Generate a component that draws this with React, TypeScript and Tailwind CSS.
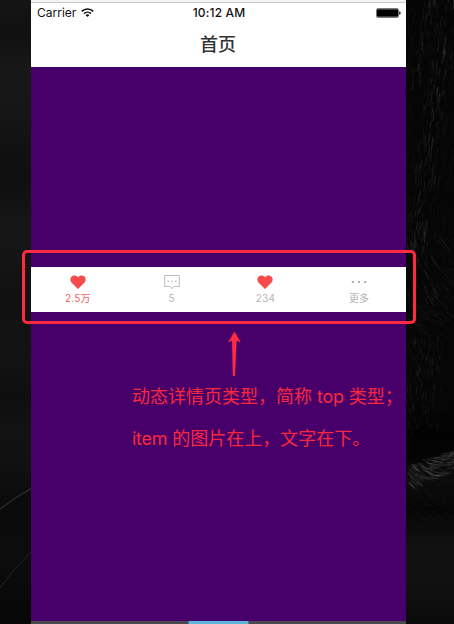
import React from "react";

const FONT = "font-['Inter','Noto_Sans_CJK_SC',sans-serif]";

type Blade = { d: string; o: number; w: number };

// Deterministic pseudo-random source, so the fur is the same on every render.
function makeRandom(seed: number) {
  let s = seed;
  return () => {
    s = (s * 1664525 + 1013904223) % 4294967296;
    return s / 4294967296;
  };
}

function buildFur(): Blade[] {
  const rnd = makeRandom(77);
  const blades: Blade[] = [];
  const add = (x: number, y: number, angle: number, len: number, o: number) => {
    const dx = Math.cos(angle) * len;
    const dy = Math.sin(angle) * len;
    const d = `M${x.toFixed(1)} ${y.toFixed(1)}q${(dx * 0.5 + 0.6).toFixed(1)} ${(dy * 0.5).toFixed(1)} ${dx.toFixed(1)} ${dy.toFixed(1)}`;
    blades.push({ d, o, w: 0.5 + rnd() * 0.4 });
  };
  for (let i = 0; i < 620; i++) {
    const y = rnd() * 250 - 4;
    const x = rnd() * 48;
    const ridge = Math.exp(-Math.pow((x - (44 - y * 0.14)) / 9, 2));
    const left = Math.exp(-Math.pow((x - (26 - y * 0.2)) / 5, 2)) * (y < 90 ? 1 : 0);
    add(x, y, 1.68 + (rnd() - 0.5) * 0.2, 4 + rnd() * 8, 0.01 + 0.17 * Math.max(ridge, left) * rnd() + 0.04 * rnd());
  }
  for (let i = 0; i < 240; i++) {
    const y = 235 + rnd() * 100;
    const x = rnd() * 48;
    const angle = y < 300 ? 1.4 - (x / 48) * 0.7 : 0.5 + (x / 48) * 0.2;
    add(x, y, angle, 5 + rnd() * 7, 0.02 + rnd() * 0.09);
  }
  for (let i = 0; i < 190; i++) {
    const y = 335 + rnd() * 92;
    add(rnd() * 36, y, 1.6 + (rnd() - 0.5) * 0.5, 3 + rnd() * 6, 0.02 + rnd() * 0.09);
  }
  for (let i = 0; i < 220; i++) {
    const x = rnd() * 50;
    const y = 475 - x * 0.32 + (rnd() - 0.5) * 22;
    add(x, y, 0.85 - (x / 48) * 1.25, 4 + rnd() * 7, 0.04 + rnd() * 0.2);
  }
  for (let i = 0; i < 90; i++) {
    add(rnd() * 48, 488 + rnd() * 34, 0.65, 5 + rnd() * 8, 0.01 + rnd() * 0.05);
  }
  return blades;
}

const fur = buildFur();

function LeftBackdrop() {
  return (
    <div className="relative w-[31px] shrink-0 overflow-hidden bg-[linear-gradient(180deg,#151515_0,#101010_34px,#171717_65px,#161616_115px,#101010_150px,#0f0f0f_185px,#161616_220px,#141414_260px,#111_300px,#131313_355px,#0e0e0e_395px,#121212_430px,#111_460px,#0b0b0b_500px,#0c0c0c_560px,#070707_624px)]">
      <svg className="block h-[624px] w-[31px]" viewBox="0 0 31 624" fill="none">
        <path d="M0 509Q15 497.5 31 488.5" stroke="#3a3a3a" strokeWidth="1" />
        <path d="M0 588Q13 569 31 552" stroke="#232323" strokeWidth="1" />
      </svg>
    </div>
  );
}

function RightBackdrop() {
  return (
    <div className="w-12 shrink-0 overflow-hidden bg-[linear-gradient(180deg,#050505_0,#060606_400px,#020202_435px,#050505_460px,#0c0c0c_480px,#050505_510px,#101010_540px,#111_580px,#0b0b0b_624px)]">
      <svg className="block h-[624px] w-12" viewBox="0 0 48 624" fill="none">
        {fur.map((b, i) => (
          <path key={i} d={b.d} stroke="#b4b4b4" strokeOpacity={b.o} strokeWidth={b.w} />
        ))}
      </svg>
    </div>
  );
}

function Wifi() {
  return (
    <svg className="ml-[5px] h-[10px] w-[13px]" viewBox="0 0 13 10" fill="none" stroke="#111">
      <path d="M.8 3.4C4 .2 9 .2 12.2 3.4" strokeWidth="1.7" />
      <path d="M3 5.6C5 3.8 8 3.8 10 5.6" strokeWidth="1.5" />
      <path d="M4.5 7Q6.5 5.6 8.5 7L6.5 9.1Z" fill="#111" stroke="none" />
    </svg>
  );
}

function Battery() {
  return (
    <svg className="h-[10px] w-[25px]" viewBox="0 0 25 10">
      <rect x=".5" y=".5" width="22" height="9" rx="1.5" fill="#fff" stroke="#777" />
      <rect x="1" y="1.3" width="21" height="7.5" rx=".8" fill="#000" />
      <path d="M23.2 3.2Q24.7 3.5 24.7 5T23.2 6.8Z" fill="#111" />
    </svg>
  );
}

function Heart() {
  return (
    <svg className="h-4 w-4" viewBox="0 0 16 16">
      <path
        d="M8 15L1.7 8.8C-.1 7 0 4.2 1.4 2.7 3.2.8 6.3 1 8 3.3 9.7 1 12.8.8 14.6 2.7 16 4.2 16.1 7 14.3 8.8Z"
        fill="#f54b4b"
      />
    </svg>
  );
}

function Bubble() {
  return (
    <svg className="h-4 w-4" viewBox="0 0 16 16" fill="none">
      <path d="M.7 1.5H15.3V12.5H10L8 14.6 6 12.5H.7Z" stroke="#bdbdbd" strokeWidth="1" />
      <path d="M3.6 7.4H5M7.3 7.4H8.7M11 7.4H12.4" stroke="#b5b5b5" strokeWidth="1.2" />
    </svg>
  );
}

function Dots() {
  return (
    <svg className="h-4 w-4" viewBox="0 0 16 16" fill="#aaa">
      <rect x=".8" y="7" width="2" height="2" rx=".4" />
      <rect x="7" y="7" width="2" height="2" rx=".4" />
      <rect x="13.2" y="7" width="2" height="2" rx=".4" />
    </svg>
  );
}

function Item({ icon, label, active }: { icon: React.ReactNode; label: string; active?: boolean }) {
  return (
    <div className="flex flex-1 flex-col items-center pt-[7px]">
      {icon}
      <span
        className={`mt-[2px] text-[10px] leading-[12px] tracking-[0.2px] ${active ? "text-[#f06464]" : "text-[#b5b5b5]"}`}
      >
        {label}
      </span>
    </div>
  );
}

export default function App() {
  return (
    <div className={`relative flex h-[624px] w-[454px] overflow-hidden bg-black ${FONT}`}>
      <LeftBackdrop />
      <main className="flex w-[375px] shrink-0 flex-col bg-[#470069]">
        <div className="h-[3px] border-b border-[#c8c8c8] bg-[#f5f5f5]" />
        <header className="h-16 bg-white">
          <div className="grid h-5 grid-cols-3 items-center pr-[5px] pl-[6px] text-[12px] text-[#111]">
            <div className="flex items-center">
              <span>Carrier</span>
              <Wifi />
            </div>
            <span className="text-center font-medium tracking-[0.15px] whitespace-nowrap">10:12 AM</span>
            <div className="flex justify-end">
              <Battery />
            </div>
          </div>
          <h1 className="pr-px text-center text-[18px] leading-[44px] font-medium text-[#333]">首页</h1>
        </header>
        <div className="h-[200px]" />
        <nav className="flex h-[45px] bg-white">
          <Item icon={<Heart />} label="2.5万" active />
          <Item icon={<Bubble />} label="5" />
          <Item icon={<Heart />} label="234" />
          <Item icon={<Dots />} label="更多" />
        </nav>
        <section className="pt-[64px] pl-[101px] text-[18px] leading-[42px] font-normal whitespace-nowrap text-[#f9283f]">
          <p>
            动态详情页类型，简称 <span className="tracking-[-0.3px]">top</span> 类型；
          </p>
          <p>
            <span className="tracking-[-0.3px]">item</span> 的图片在上，文字在下。
          </p>
        </section>
        <div className="mt-auto flex h-[3px] bg-[#494950]">
          <div className="ml-[157px] w-[61px] border-x border-[#4d7890] bg-[#5eb5dc]" />
        </div>
      </main>
      <RightBackdrop />
      <div className="absolute top-[250px] left-[22px] h-[74px] w-[394px] rounded-[5px] border-3 border-[#ff2940]" />
      <svg className="absolute top-[331px] left-[227px] h-[46px] w-[15px]" viewBox="0 0 15 46">
        <path d="M7.5.5L13.7 11.5 9.7 9.7 8 44.5Q6.8 46 5.8 44.5L5 9.7 1 11.5Z" fill="#ff2940" />
      </svg>
    </div>
  );
}
